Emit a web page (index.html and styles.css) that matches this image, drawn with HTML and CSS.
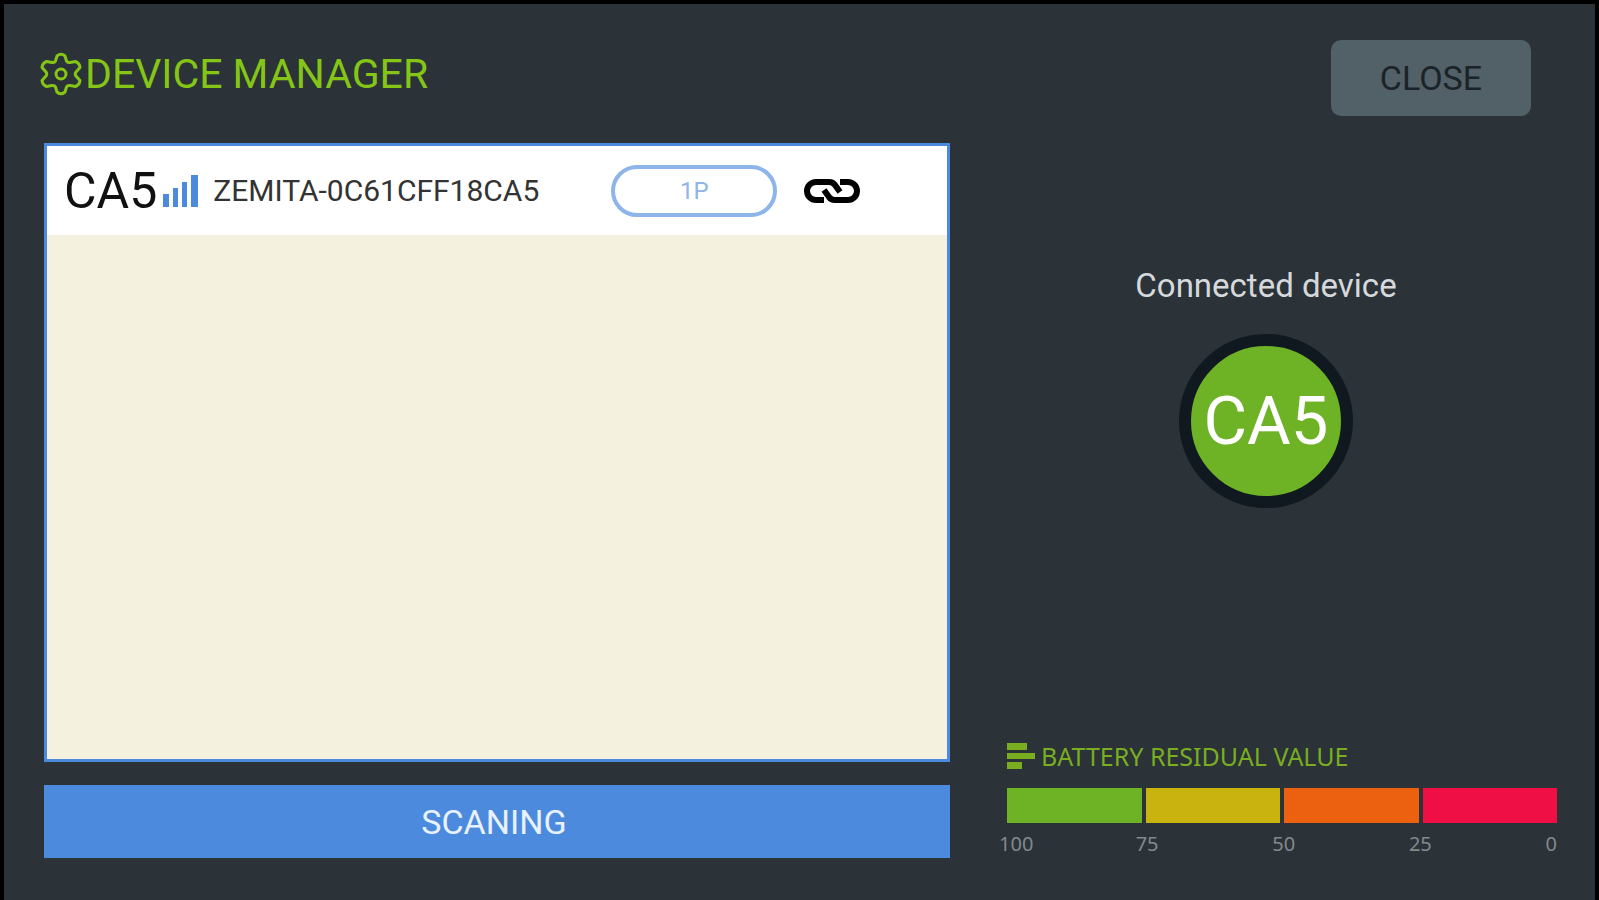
FILE: index.html
```html
<!DOCTYPE html>
<html lang="en">
<head>
<meta charset="UTF-8"/>
<meta name="viewport" content="width=device-width,initial-scale=1.0"/>
<title>Device Manager</title>
<link rel="stylesheet" href="styles.css">
</head>
<body>

<!-- header -->
<header>
  <h1>
    <svg class="gear" viewBox="0 0 42 44" fill="none" stroke="currentColor" stroke-width="3" stroke-linejoin="round" aria-hidden="true">
      <path d="M17 4Q21 .5 25 4L26.500 9Q27.500 11 30 10.500L35.500 9.500Q39.500 11 40 15.500L36 20Q34.500 22 36 24L40 28.500Q39.500 33 35.500 34.500L30 33.500Q27.500 33 26.500 35L25 40Q21 43.500 17 40L15.500 35Q14.500 33 12 33.500L6.500 34.500Q2.500 33 2 28.500L6 24Q7.500 22 6 20L2 15.500Q2.500 11 6.500 9.500L12 10.500Q14.500 11 15.500 9Z"/>
      <circle cx="21" cy="22" r="5"/>
    </svg>
    DEVICE MANAGER
  </h1>
  <button class="close" type="button">CLOSE</button>
</header>

<main>
  <!-- found devices -->
  <section class="scan">
    <ul class="list">
      <li class="row">
        <span class="short">CA5</span>
        <svg class="signal" viewBox="0 0 36 32" fill="currentColor" aria-hidden="true">
          <path d="M0 19h6v13H0zM10 13h5v19h-5zM19 7h5v25h-5zM28 0h7v32h-7z"/>
        </svg>
        <span class="name">ZEMITA-0C61CFF18CA5</span>
        <button class="player" type="button">1P</button>
        <button class="link" type="button" aria-label="Disconnect">
          <svg viewBox="0 0 60 28" fill="none" stroke="currentColor" stroke-width="6" aria-hidden="true">
            <path d="M22 23H14A9 9 0 0 1 14 5H27Q31 5 33 8L38 15"/>
            <path d="M38 5H46A9 9 0 0 1 46 23H33Q29 23 27 20L22 13"/>
          </svg>
        </button>
      </li>
    </ul>
    <button class="scan-btn" type="button">SCANING</button>
  </section>

  <!-- connected device + battery -->
  <aside>
    <div class="connected">
      <h2>Connected device</h2>
      <div class="badge">CA5</div>
    </div>
    <div class="battery">
      <h3>
        <svg viewBox="0 0 28 26" fill="currentColor" aria-hidden="true">
          <path d="M0 0h20v7H0zM0 10h28v6H0zM0 19h15v7H0z"/>
        </svg>
        BATTERY RESIDUAL VALUE
      </h3>
      <div class="bar"><i class="green"></i><i class="yellow"></i><i class="orange"></i><i class="red"></i></div>
      <div class="scale"><span>100</span><span>75</span><span>50</span><span>25</span><span>0</span></div>
    </div>
  </aside>
</main>

</body>
</html>
```
FILE: styles.css
```css
:root{
  --bg:#2b3238;--lime:#84c515;--green:#6eb225;--blue:#4b8adc;
}
*,*::before,*::after{box-sizing:border-box;margin:0;padding:0}
body{min-height:100vh;display:flex;flex-direction:column;background:var(--bg);border:4px solid #000;border-bottom:0;font-family:Roboto,"Liberation Sans",sans-serif}
button{font:inherit;cursor:pointer}
h1,h2,h3{font-weight:400}

/* header */
header{display:flex;justify-content:space-between;align-items:flex-start;padding:36px 64px 0 36px}
h1{display:flex;align-items:center;gap:3px;margin-top:10px;font-size:41px;line-height:48px;color:var(--lime)}
.gear{width:42px;height:44px}
.close{width:200px;height:76px;border:0;border-radius:10px;background:#526067;color:#1b2328;font-size:34px}

/* columns */
main{flex:1;display:grid;grid-template-columns:1fr 550px;gap:57px;padding:27px 38px 42px 40px}
.scan{display:flex;flex-direction:column;gap:23px}

/* device list */
.list{flex:1;list-style:none;background:#f4f2df;border:3px solid var(--blue)}
.row{display:flex;align-items:center;height:89px;padding-left:17px;background:#fff}
.short{font-size:50px;color:#111}
.signal{width:36px;height:32px;margin:0 14px 0 6px;color:var(--blue)}
.name{width:398px;font-size:30px;color:#333}
.player{width:166px;height:52px;border:4px solid #8db5ea;border-radius:26px;background:none;color:#8db5ea;font-size:24px}
.link{margin-left:24px;width:62px;height:28px;border:0;background:none;color:#000}
.link svg{display:block;width:100%;height:100%}
.scan-btn{height:73px;padding-right:6px;border:0;background:var(--blue);color:#e8f1ff;font-size:34px}

/* right side */
aside{display:flex;flex-direction:column;justify-content:space-between}
.connected{display:flex;flex-direction:column;align-items:center;gap:28px;padding:123px 32px 0 0}
h2{font-size:33px;line-height:40px;color:#d5d9dc}
.badge{display:grid;place-items:center;width:174px;height:174px;border:12px solid #101920;border-radius:50%;background:var(--green);color:#fff;font-size:67px}

/* battery */
h3{display:flex;align-items:center;gap:6px;font-family:"Noto Sans",sans-serif;font-size:25px;line-height:32px;color:#78ae20}
h3 svg{width:28px;height:26px}
.bar{display:grid;grid-template-columns:repeat(4,1fr);gap:4px;height:35px;margin-top:16px}
.green{background:var(--green)}
.yellow{background:#c9b40f}
.orange{background:#ec610f}
.red{background:#f00f45}
.scale{display:grid;grid-template-columns:repeat(4,1fr) auto;margin:7px 0 0 -8px;font-family:"Noto Sans",sans-serif;font-size:20px;line-height:28px;color:#83898d}
```
